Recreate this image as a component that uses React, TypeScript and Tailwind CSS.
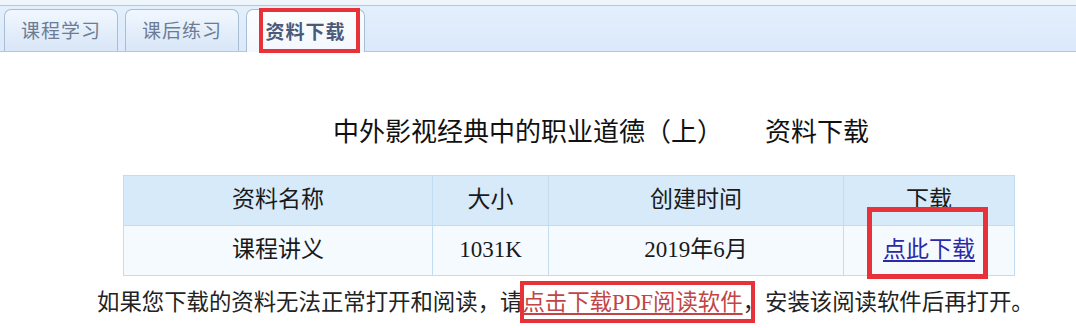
import type React from "react";

const serif = "font-['Liberation_Serif','Noto_Sans_CJK_SC',serif]";

const Tab = ({ label, active }: { label: string; active?: boolean }): React.ReactElement => {
	return (
		<div
			className={
				active
					? "relative z-10 -mb-px flex h-[43px] w-[119px] items-center justify-center rounded-t-[7px] border border-b-0 border-[#a9bdd4] bg-gradient-to-b from-[#fbfdff] to-[#f3f8fe]"
					: "flex h-[42px] w-[114px] items-center justify-center rounded-t-[7px] border border-b-0 border-[#a9bdd4] bg-gradient-to-b from-[#f1f7fe] to-[#d8e6f7]"
			}
		>
			<span
				className={
					active
						? "text-[19px] font-bold tracking-[1px] text-[#4a5a78]"
						: "text-[19px] tracking-[1px] text-[#6c7c95]"
				}
			>
				{label}
			</span>
		</div>
	);
};

export default function App(): React.ReactElement {
	return (
		<main className="relative h-[328px] w-[1076px] overflow-hidden bg-white font-['Noto_Sans_CJK_SC',sans-serif]">
			<div className="h-[5px] bg-[#eef6fc]" />
			<nav className="flex h-[47px] items-end gap-[7px] border-y border-y-[#b4c8dc] bg-gradient-to-b from-[#e3effc] to-[#dbe9fb] pl-[4px]">
				<Tab label="课程学习" />
				<Tab label="课后练习" />
				<Tab label="资料下载" active />
			</nav>

			<section className={`${serif} ml-[123px] w-[892px] text-[#1a1a1a]`}>
				<h1 className="mt-[64px] flex h-[34px] items-center justify-center gap-[42px] pl-[64px] text-[26px] leading-none text-[#111]">
					<span>中外影视经典中的职业道德（上）</span>
					<span>资料下载</span>
				</h1>

				<table className="mt-[25px] w-full table-fixed border-collapse text-[23px]">
					<colgroup>
						<col className="w-[309px]" />
						<col className="w-[116px]" />
						<col className="w-[295px]" />
						<col />
					</colgroup>
					<thead>
						<tr className="h-[50px] bg-[#d6eaf9]">
							<th className="border border-[#c3dcef] font-normal">资料名称</th>
							<th className="border border-[#c3dcef] font-normal">大小</th>
							<th className="border border-[#c3dcef] font-normal">创建时间</th>
							<th className="border border-[#c3dcef] font-normal">下载</th>
						</tr>
					</thead>
					<tbody>
						<tr className="h-[50px] bg-[#f5faff]">
							<td className="border border-[#c3dcef] text-center">课程讲义</td>
							<td className="border border-[#c3dcef] text-center">1031K</td>
							<td className="border border-[#c3dcef] text-center">2019年6月</td>
							<td className="border border-[#c3dcef] text-center">
								<a href="#" className="text-[#2a2aa8] underline underline-offset-[3px]">
									点此下载
								</a>
							</td>
						</tr>
					</tbody>
				</table>

				<p className="-ml-[26px] mt-[16px] whitespace-nowrap text-[22.4px] leading-none text-[#222]">
					如果您下载的资料无法正常打开和阅读，请
					<a href="#" className="text-[#c24545] underline underline-offset-[3px]">
						点击下载PDF阅读软件
					</a>
					，安装该阅读软件后再打开。
				</p>
			</section>

			{/* red highlight boxes */}
			<div className="absolute left-[259px] top-[8px] z-20 h-[45px] w-[101px] border-[4px] border-[#e8323a]" />
			<div className="absolute left-[867px] top-[207px] z-20 h-[72px] w-[121px] border-[5px] border-[#e8323a]" />
			<div className="absolute left-[520px] top-[281px] z-20 h-[42px] w-[235px] border-[4px] border-[#e8323a]" />
		</main>
	);
}
